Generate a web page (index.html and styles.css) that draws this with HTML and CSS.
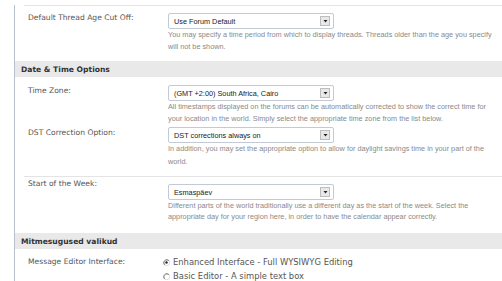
FILE: index.html
```html
<!DOCTYPE html>
<html>
<head>
<meta charset="utf-8">
<link rel="stylesheet" href="styles.css">
</head>
<body>
<div class="panel">
  <div class="sep"></div>
  <div class="row row-first">
    <div class="label">Default Thread Age Cut Off:</div>
    <div class="control">
      <div class="select"><span class="select-text">Use Forum Default</span><span class="arrow"><svg width="5" height="4" viewBox="0 0 5 4"><path d="M0.5 1h4L2.5 3.5z" fill="#222"/></svg></span></div>
      <div class="desc">You may specify a time period from which to display threads. Threads older than the age you specify will not be shown.</div>
    </div>
  </div>

  <div class="header">Date &amp; Time Options</div>
  <div class="row row-tz">
    <div class="label">Time Zone:</div>
    <div class="control">
      <div class="select"><span class="select-text">(GMT +2:00) South Africa, Cairo</span><span class="arrow"><svg width="5" height="4" viewBox="0 0 5 4"><path d="M0.5 1h4L2.5 3.5z" fill="#222"/></svg></span></div>
      <div class="desc">All timestamps displayed on the forums can be automatically corrected to show the correct time for your location in the world. Simply select the appropriate time zone from the list below.</div>
    </div>
  </div>
  <div class="row row-dst">
    <div class="label">DST Correction Option:</div>
    <div class="control">
      <div class="select"><span class="select-text">DST corrections always on</span><span class="arrow"><svg width="5" height="4" viewBox="0 0 5 4"><path d="M0.5 1h4L2.5 3.5z" fill="#222"/></svg></span></div>
      <div class="desc">In addition, you may set the appropriate option to allow for daylight savings time in your part of the world.</div>
    </div>
  </div>
  <div class="sep"></div>
  <div class="row row-week">
    <div class="label">Start of the Week:</div>
    <div class="control">
      <div class="select"><span class="select-text">Esmaspäev</span><span class="arrow"><svg width="5" height="4" viewBox="0 0 5 4"><path d="M0.5 1h4L2.5 3.5z" fill="#222"/></svg></span></div>
      <div class="desc">Different parts of the world traditionally use a different day as the start of the week. Select the appropriate day for your region here, in order to have the calendar appear correctly.</div>
    </div>
  </div>

  <div class="header">Mitmesugused valikud</div>
  <div class="row row-editor">
    <div class="label">Message Editor Interface:</div>
    <div class="control">
      <div class="radio"><svg class="radio-icon" width="7" height="7" viewBox="0 0 7 7"><path d="M6.2 2A3 3 0 1 0 2 6.2" fill="none" stroke="#666" stroke-width="1"/><path d="M6.2 2A3 3 0 0 1 2 6.2" fill="none" stroke="#ddd" stroke-width="1"/><circle cx="3.5" cy="3.5" r="1.2" fill="#222"/></svg><span>Enhanced Interface - Full WYSIWYG Editing</span></div>
      <div class="radio"><svg class="radio-icon" width="7" height="7" viewBox="0 0 7 7"><path d="M6.2 2A3 3 0 1 0 2 6.2" fill="none" stroke="#666" stroke-width="1"/><path d="M6.2 2A3 3 0 0 1 2 6.2" fill="none" stroke="#ddd" stroke-width="1"/></svg><span>Basic Editor - A simple text box</span></div>
    </div>
  </div>
</div>
</body>
</html>
```
FILE: styles.css
```css
html, body {
  margin: 0;
  padding: 0;
  background: #fff;
  height: 100%;
  overflow: hidden;
}
.panel {
  margin-left: 14px;
  border-left: 1px solid #b7c1cd;
  min-height: 281px;
  font-family: "DejaVu Sans", Verdana, sans-serif;
}
.sep {
  margin-left: 9px;
  border-top: 1px solid #e4e4e4;
}
.panel > .sep:first-child {
  margin-top: 5px;
}
.row {
  display: grid;
  grid-template-columns: 140px 1fr;
  padding-left: 13px;
}
.label {
  font-size: 7.6px;
  line-height: 12px;
  color: #555;
}
.select {
  width: 166px;
  height: 16px;
  box-sizing: border-box;
  border: 1px solid #c3cad3;
  border-radius: 2px;
  display: flex;
  align-items: center;
  justify-content: space-between;
  padding: 0 3px 0 5px;
  background: #fff;
}
.select-text {
  font-family: "Liberation Sans", Arial, sans-serif;
  font-size: 7.3px;
  color: #222;
}
.arrow {
  width: 10px;
  height: 10px;
  box-sizing: border-box;
  border: 1px solid #bdbdbd;
  background: #e8e8e8;
  display: flex;
  align-items: center;
  justify-content: center;
}
.arrow svg {
  display: block;
}
.desc {
  font-family: "Liberation Sans", Arial, sans-serif;
  font-size: 7.3px;
  line-height: 12px;
  color: #8a8a8a;
  padding-right: 8px;
}
.header {
  background: #e9e9e9;
  height: 16px;
  line-height: 17px;
  padding-left: 6px;
  font-size: 7.6px;
  font-weight: bold;
  color: #333;
}
.row-first {
  padding-top: 6px;
  padding-bottom: 8px;
}
.row-first .select {
  margin-top: 1px;
}
.row-tz {
  padding-top: 8px;
}
.row-dst {
  padding-top: 2px;
  padding-bottom: 8px;
}
.row-dst .desc {
  line-height: 12.5px;
}
.row-week {
  padding-top: 1px;
  padding-bottom: 11px;
}
.row-week .select {
  margin-top: 6px;
}
.row-week .desc {
  line-height: 11px;
}
.row-editor {
  padding-top: 6px;
}
.row-editor .label {
  line-height: 14px;
}
.radio {
  display: flex;
  align-items: center;
  height: 14px;
  font-size: 8.4px;
  color: #555;
}
.radio-icon {
  display: block;
  margin-left: -5px;
  margin-right: 3px;
}
```
